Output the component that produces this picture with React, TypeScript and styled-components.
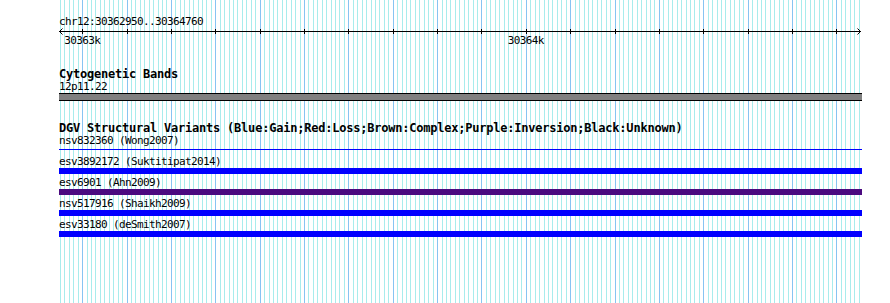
import React from "react";
import styled, { createGlobalStyle } from "styled-components";

const START = 30362950;
const END = 30364760;
const TRACK_WIDTH = 803;
const PX_PER_BP = TRACK_WIDTH / (END - START);

// grid lines every 10bp, darker every 100bp
const gridLines = Array.from({ length: 181 }, (_, k) => ({
  x: 1 + Math.round(k * 10 * PX_PER_BP),
  major: k % 10 === 5,
}));

const tickLabels = [
  { bp: 30363000, text: "30363k" },
  { bp: 30364000, text: "30364k" },
];

const bpToX = (bp: number) => 1 + (bp - START) * PX_PER_BP;

const GlobalStyle = createGlobalStyle`
  html, body {
    margin: 0;
    padding: 0;
    background: #fff;
  }
`;

const Page = styled.div`
  width: 890px;
  height: 303px;
  overflow: hidden;
  background: #fff;
`;

const Panel = styled.div`
  position: relative;
  width: ${TRACK_WIDTH}px;
  height: 303px;
  margin-left: 59px;
`;

const GridSvg = styled.svg`
  position: absolute;
  inset: 0;
  z-index: 0;
`;

const Content = styled.div`
  position: relative;
  z-index: 1;
  display: flex;
  flex-direction: column;
  padding-top: 15px;
`;

const Mono = styled.div<{ $lh?: number }>`
  font-family: "DejaVu Sans Mono", "Liberation Mono", monospace;
  font-size: 11px;
  letter-spacing: -0.62px;
  line-height: ${(p) => p.$lh ?? 13}px;
  color: #000;
  white-space: nowrap;
`;

const TrackTitle = styled.div<{ $gap: number }>`
  font-family: "DejaVu Sans Mono", "Liberation Mono", monospace;
  font-weight: bold;
  font-size: 12px;
  letter-spacing: -0.22px;
  line-height: 12px;
  color: #000;
  white-space: nowrap;
  margin-top: ${(p) => p.$gap}px;
`;

const AxisSvg = styled.svg`
  display: block;
`;

const TickRow = styled.div`
  position: relative;
  height: 11px;
`;

const TickLabel = styled(Mono)`
  position: absolute;
  top: 0;
  transform: translateX(-50%);
`;

const BandBar = styled.div`
  height: 6px;
  background: #808080;
  border-top: 1px solid #000;
  border-bottom: 1px solid #000;
`;

const Feature = styled.div`
  display: flex;
  flex-direction: column;
  margin-bottom: 2px;
`;

const Glyph = styled.div<{ $color: string; $thin?: boolean }>`
  height: ${(p) => (p.$thin ? 1 : 6)}px;
  margin: ${(p) => (p.$thin ? "2px 0 3px" : "0")};
  background: ${(p) => p.$color};
`;

const variants = [
  { name: "nsv832360 (Wong2007)", color: "#0000ff", thin: true },
  { name: "esv3892172 (Suktitipat2014)", color: "#0000ff" },
  { name: "esv6901 (Ahn2009)", color: "#4b0a80" },
  { name: "nsv517916 (Shaikh2009)", color: "#0000ff" },
  { name: "esv33180 (deSmith2007)", color: "#0000ff" },
];

const Grid = () => (
  <GridSvg width={TRACK_WIDTH} height={303} shapeRendering="crispEdges">
    {gridLines.map((g, i) => (
      <line
        key={i}
        x1={g.x + 0.5}
        x2={g.x + 0.5}
        y1={0}
        y2={303}
        stroke={g.major ? "#87c4f2" : "#a8ecec"}
        strokeWidth={1}
      />
    ))}
  </GridSvg>
);

const Axis = () => (
  <AxisSvg width={TRACK_WIDTH} height={7} shapeRendering="crispEdges">
    <line x1={0} x2={802} y1={3.5} y2={3.5} stroke="#000" />
    {gridLines
      .filter((g) => g.major)
      .map((g, i) => (
        <line key={i} x1={g.x + 0.5} x2={g.x + 0.5} y1={1} y2={6} stroke="#000" />
      ))}
    <polyline points="3.5,0.5 0.5,3.5 3.5,6.5" fill="none" stroke="#000" shapeRendering="auto" />
    <polyline points="798.5,0.5 801.5,3.5 798.5,6.5" fill="none" stroke="#000" shapeRendering="auto" />
  </AxisSvg>
);

const App = () => {
  return (
    <Page>
      <GlobalStyle />
      <Panel>
        <Grid />
        <Content>
          <Mono>chr12:30362950..30364760</Mono>
          <Axis />
          <TickRow>
            {tickLabels.map((t) => (
              <TickLabel key={t.text} $lh={11} style={{ left: bpToX(t.bp) }}>
                {t.text}
              </TickLabel>
            ))}
          </TickRow>

          <TrackTitle $gap={22}>Cytogenetic Bands</TrackTitle>
          <Mono>12p11.22</Mono>
          <BandBar />

          <TrackTitle $gap={21}>
            DGV Structural Variants
            (Blue:Gain;Red:Loss;Brown:Complex;Purple:Inversion;Black:Unknown)
          </TrackTitle>
          {variants.map((v) => (
            <Feature key={v.name}>
              <Mono>{v.name}</Mono>
              <Glyph $color={v.color} $thin={v.thin} />
            </Feature>
          ))}
        </Content>
      </Panel>
    </Page>
  );
};

export default App;
